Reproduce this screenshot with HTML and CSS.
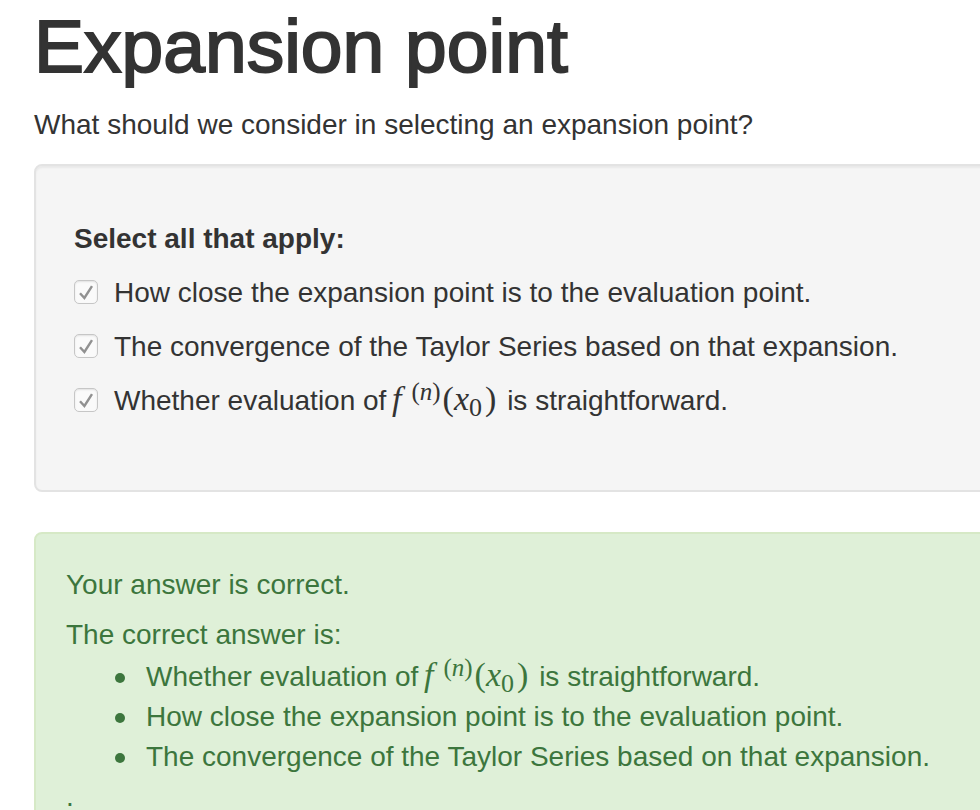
FILE: index.html
```html
<!DOCTYPE html>
<html lang="en">
<head>
<meta charset="utf-8">
<title>Expansion point</title>
<link rel="stylesheet" href="styles.css">
</head>
<body>
<main>
<h1>Expansion point</h1>
<p class="question">What should we consider in selecting an expansion point?</p>
<form class="well">
<fieldset>
<legend>Select all that apply:</legend>
<div class="choice"><input type="checkbox" id="c1" checked><label for="c1">How close the expansion point is to the evaluation point.</label></div>
<div class="choice"><input type="checkbox" id="c2" checked><label for="c2">The convergence of the Taylor Series based on that expansion.</label></div>
<div class="choice"><input type="checkbox" id="c3" checked><label for="c3">Whether evaluation of&thinsp;<span class="math"><i>f</i><sup>(<i>n</i>)</sup>(<i>x</i><sub>0</sub>)</span> is straightforward.</label></div>
</fieldset>
</form>
<section class="feedback">
<p>Your answer is correct.</p>
<p>The correct answer is:</p>
<ul>
<li>Whether evaluation of&thinsp;<span class="math"><i>f</i><sup>(<i>n</i>)</sup>(<i>x</i><sub>0</sub>)</span> is straightforward.</li>
<li>How close the expansion point is to the evaluation point.</li>
<li>The convergence of the Taylor Series based on that expansion.</li>
</ul>
<p>.</p>
</section>
</main>
</body>
</html>
```
FILE: styles.css
```css
* { box-sizing: border-box; }
body {
  margin: 0;
  background: #fff;
  color: #333;
  font: 28px/40px "Liberation Sans", Arial, sans-serif;
  overflow-x: hidden;
}
main { padding: 6px 0 0 34px; }
h1, p, ul, fieldset { margin: 0; padding: 0; }
h1 {
  font-size: 75px;
  font-weight: normal;
  line-height: 80px;
  -webkit-text-stroke: 2px #333;
}
.question { margin: 19px 0; }
.well, .feedback {
  margin-right: -8px;
  border: 2px solid #e3e3e3;
  border-radius: 8px;
}
.well {
  padding: 53px 38px 55px;
  background: #f5f5f5;
  box-shadow: inset 0 2px 2px rgba(0, 0, 0, 0.05);
}
fieldset { border: 0; min-width: 0; }
legend { padding: 0; font-weight: bold; margin-bottom: 14px; }
.choice {
  display: flex;
  align-items: center;
  gap: 16px;
  height: 40px;
  margin-bottom: 14px;
  white-space: nowrap;
}
input {
  appearance: none;
  width: 24px;
  height: 24px;
  margin: 0 0 2px;
  border: 1px solid #c6c6c6;
  border-radius: 5px;
  box-shadow: inset 0 1px 2px rgba(0, 0, 0, 0.1);
  background: #fafafa url("data:image/svg+xml,%3Csvg xmlns='http://www.w3.org/2000/svg' viewBox='0 0 22 22'%3E%3Cpath d='M5 12.2l4.4 4.8L17 5.2' fill='none' stroke='%23919191' stroke-width='2.4'/%3E%3C/svg%3E") center / 22px 22px no-repeat;
}
.math {
  margin-right: 3px;
  font-family: "Liberation Serif", "Times New Roman", serif;
  font-size: 34px;
  line-height: 0;
}
.math sup { font-size: 25px; vertical-align: 10px; margin: 0 2px 0 10px; line-height: 0; }
.math sub { font-size: 26px; vertical-align: -6px; margin-right: 3px; line-height: 0; }
.feedback {
  margin-top: 40px;
  padding: 31px 30px;
  border-color: #d6e9c6;
  background: #dff0d8;
  color: #3c763d;
}
.feedback p + p { margin-top: 10px; }
ul { margin-top: 2px; padding-left: 80px; list-style: none; }
li { white-space: nowrap; }
li::before {
  content: "";
  display: inline-block;
  width: 10px;
  height: 10px;
  margin: 0 21px 0 -31px;
  border-radius: 50%;
  background: currentColor;
  vertical-align: 3px;
}
```
